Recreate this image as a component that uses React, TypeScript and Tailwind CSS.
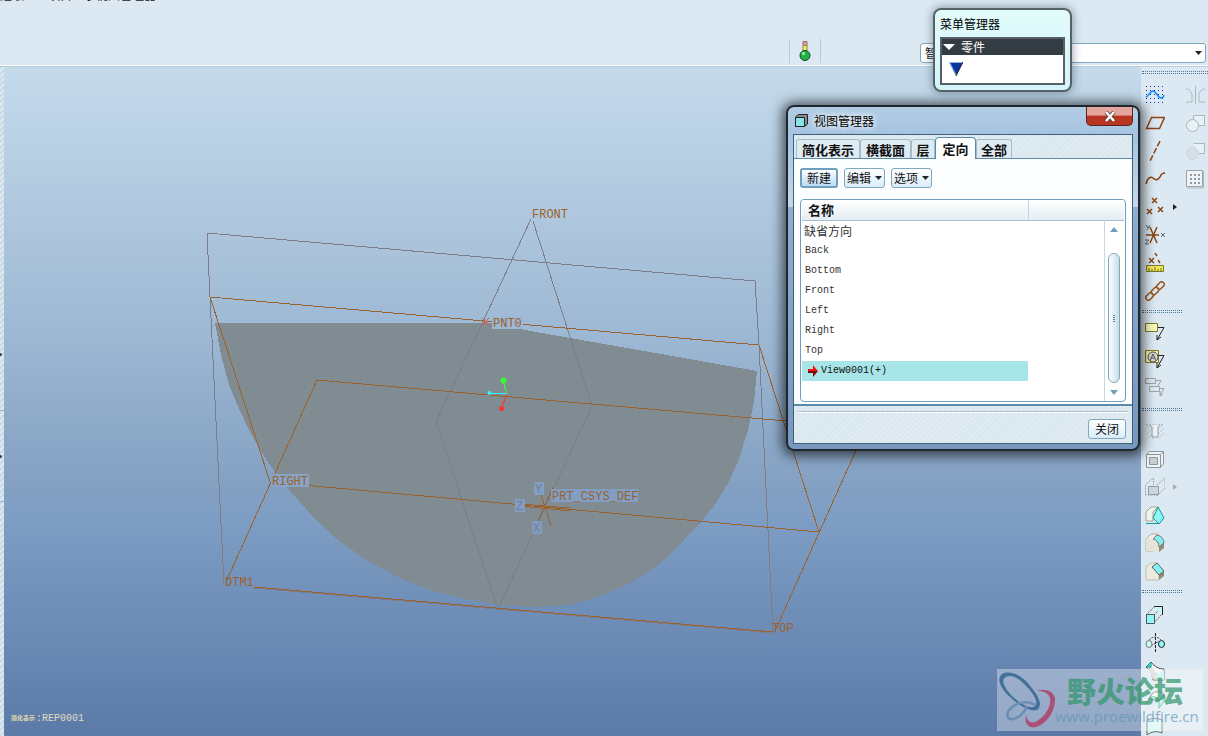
import type { ReactNode } from 'react';

const VIEWS = ['Back', 'Bottom', 'Front', 'Left', 'Right', 'Top'];

const BROWN = '#8b4513';
const PALE = '#a9b6bf';

type Tool = { name: string; icon: ReactNode; side?: ReactNode; more?: boolean; off?: boolean };

const datumTools: Tool[] = [
  {
    name: '草绘',
    icon: (
      <>
        <path
          d="M1 1.500h18M1 5.500h18M1 9.500h18M1 13.500h18M1 17.500h18"
          stroke="#14389c"
          strokeDasharray="1 3"
          shapeRendering="crispEdges"
        />
        <path d="M1 12c3-1 4-6 7-6s5 7 8 7 2-1 3-3" stroke="#0a84ff" strokeWidth="1.500" />
      </>
    ),
    side: <path d="M10.500 1v18M1 4c4 0 6 4 6 6v7H1M20 4c-4 0-6 4-6 6v7h6" stroke={PALE} />,
  },
  {
    name: '基准平面',
    icon: <path d="M6.500 4.500h13l-5 11h-13z" stroke={BROWN} strokeWidth="1.500" />,
    side: (
      <>
        <path d="M8.500 2.500h11v10h-11z" stroke={PALE} fill="#eaf1f6" />
        <circle cx="7.500" cy="12.500" r="6" stroke={PALE} fill="#eaf1f6" />
      </>
    ),
  },
  {
    name: '基准轴',
    icon: <path d="M15 0L5 20" stroke={BROWN} strokeWidth="1.500" strokeDasharray="6 2" />,
    side: (
      <>
        <path d="M8.500 2.500h11v10h-6" stroke={PALE} fill="#eaf1f6" />
        <circle cx="7.500" cy="12.500" r="6" stroke="#cdd6dd" fill="#d7dee4" />
      </>
    ),
  },
  {
    name: '基准曲线',
    icon: <path d="M1 15c1-5 4-8 7-6s4 3 7-1c1-3 3-4 5-4" stroke={BROWN} strokeWidth="1.500" />,
    side: (
      <>
        <path d="M1.500 1.500h16v16h-16z" stroke="#96a2aa" fill="#f0f4f7" />
        <path d="M18.500 2v17H2" stroke="#b0babf" />
        <path
          d="M5 6h10M5 10h10M5 14h10"
          stroke="#8f9ba3"
          strokeWidth="2"
          strokeDasharray="2 2"
          shapeRendering="crispEdges"
        />
      </>
    ),
  },
  {
    name: '基准点',
    icon: (
      <path
        d="M7 1l5 5M12 1L7 6M2 12l5 5M7 12l-5 5M13 10l5 5M18 10l-5 5"
        stroke={BROWN}
        strokeWidth="1.500"
      />
    ),
    more: true,
  },
  {
    name: '坐标系',
    icon: (
      <>
        <path d="M1 10h13M5 2l7 16M12 2L5 18" stroke={BROWN} strokeWidth="1.500" />
        <path d="M1 0l2 3M5 0L2 5M0 15h4l-4 4h4M16 8l4 4M20 8l-4 4" stroke="#5f6a70" />
      </>
    ),
  },
  {
    name: '分析',
    icon: (
      <>
        <path d="M4 5l5 5M9 5l-5 5M10 0l2 3M13 7l2 3" stroke={BROWN} strokeWidth="1.500" />
        <path d="M1.500 12.500h17v6h-17z" stroke="#7d7a28" fill="#f0ea58" />
        <path d="M4 18v-3M7 18v-2M10 18v-4M13 18v-2M16 18v-3" stroke="#6b681c" />
      </>
    ),
  },
  {
    name: '参照',
    icon: (
      <g stroke="#9a5a22" strokeWidth="1.500">
        <rect x="-4" y="-2.500" width="8" height="5" rx="2" transform="translate(4.500 15.500) rotate(-45)" />
        <rect x="-4" y="-2.500" width="8" height="5" rx="2" transform="translate(10 10) rotate(-45)" />
        <rect x="-4" y="-2.500" width="8" height="5" rx="2" transform="translate(15.500 4.500) rotate(-45)" />
      </g>
    ),
  },
];

const noteTools: Tool[] = [
  {
    name: '注释',
    icon: (
      <>
        <path d="M.5 2.500h12v8H.5z" stroke="#7c7a1e" fill="#fbfbc0" />
        <path d="M13 6.500h6L12 19M12 14v5l4-3" stroke="#222" />
      </>
    ),
  },
  {
    name: '符号',
    icon: (
      <>
        <path d="M.5 1.500h13v12H.5z" stroke="#7c7a1e" fill="#f5f3a8" />
        <circle cx="8" cy="8" r="5" stroke="#555" fill="#d5d6cf" />
        <path d="M5 12l3-7 3 7M6 9h4" stroke="#555" />
        <path d="M13 6.500h6L12 19M12 14v5l4-3" stroke="#222" />
      </>
    ),
  },
  {
    name: '传播',
    icon: (
      <g stroke="#9aa5ad">
        <path d="M.5 1.500h10v5H.5zM4.500 9.500h10v5h-10z" fill="#e3e9ee" />
        <path d="M11 3.500h5l-3 5M15 11.500h4l-4 7M15 14v5l3-2" />
      </g>
    ),
    off: true,
  },
];

const featureTools: Tool[] = [
  {
    name: '孔',
    icon: (
      <>
        <path d="M2 8l4-4M2 13l6-7M2 18l6-6M7 18l3-3M13 8l5-5M13 13l6-6M13 18l6-6" stroke="#c0c9cf" />
        <path d="M1 4h18" stroke="#9fabb3" strokeDasharray="2 1" />
        <path d="M5 4l2 2v10h6V6l2-2" stroke="#93a0a8" fill="#eef3f7" />
      </>
    ),
    off: true,
  },
  {
    name: '壳',
    icon: (
      <>
        <path d="M1.500 5.500l3-3h14v12l-3 4h-14z" stroke="#8b969d" fill="#f0f3f5" />
        <path d="M1.500 5.500h14v13M15.500 5.500l3-3" stroke="#8b969d" />
        <path d="M4.500 8.500h8v7h-8z" stroke="#8b969d" fill="#c9d0d5" />
      </>
    ),
    off: true,
  },
  {
    name: '筋',
    icon: (
      <>
        <path d="M.5 18.500V8l8-7v7M12 18.500h1M12 8l8-7v10l-7 7H1" stroke="#9ba7af" strokeDasharray="2 1" />
        <path d="M3.500 9.500h10v8h-10z" stroke="#909ba3" fill="#ccd5db" />
      </>
    ),
    more: true,
    off: true,
  },
  {
    name: '拔模',
    icon: (
      <>
        <path d="M1 7l5-5h7L8 7v9H1z" stroke="#a8a294" fill="#eef5e9" />
        <path d="M8 13l5-11 6 11-5 6z" stroke="#0d9b9b" fill="#8ff6f6" />
        <path d="M1 18.500h13" stroke="#0d9b9b" />
      </>
    ),
  },
  {
    name: '倒圆角',
    icon: (
      <>
        <path d="M1 6l5-5h7L8 6v12H1z" fill="#f1efe4" stroke="#b5afa0" />
        <path d="M1 6h7c4 1 6 4 6 12H1z" fill="#e6e4d8" />
        <path d="M14 19v-7l5-3v6z" fill="#938b75" />
        <path d="M8 6l4-4c5 1 7 5 7 8l-5 4c0-4-2-7-6-8z" fill="#7ff1f4" stroke="#6f6f6f" />
      </>
    ),
  },
  {
    name: '倒角',
    icon: (
      <>
        <path d="M1 6l5-4h6L7 6l7 7v6H1z" fill="#eceade" stroke="#c3beae" />
        <path d="M14 19v-6l5-3v5z" fill="#938b75" />
        <path d="M7 6l5-4 7 8-5 4z" fill="#7ff1f4" stroke="#5f5f5f" />
      </>
    ),
  },
];

const shapeTools: Tool[] = [
  {
    name: '拉伸',
    icon: (
      <>
        <path d="M1 10l8-8M9 10l8-8M9 18l8-9" stroke="#666" strokeDasharray="2 1" />
        <path d="M9 1.500h8.500V10" stroke="#222" fill="#c9f3f5" />
        <path d="M1.500 9.500h8v9h-8z" stroke="#555" fill="#8ffafa" />
      </>
    ),
  },
  {
    name: '旋转',
    icon: (
      <>
        <path d="M10.500 0v20" stroke="#222" strokeDasharray="3 1" />
        <path d="M4 7c4-4 8-4 12 0M6 13l8-5" stroke="#555" strokeDasharray="2 1" />
        <ellipse cx="4" cy="11" rx="3" ry="3.500" stroke="#777" fill="#c7fafa" />
        <ellipse cx="16.500" cy="11" rx="3" ry="3.500" stroke="#222" fill="#8ffafa" />
      </>
    ),
  },
  {
    name: '可变截面扫描',
    icon: (
      <>
        <path d="M6 1c4 5 8 7 13 7v11H8C7 12 5 9 1 6z" fill="#f3f6f6" stroke="#444" />
        <path d="M2 6l6 12 10 1L6 6z" fill="#d4d4d4" />
        <path d="M10 15l9-6v10z" fill="#b6f5f2" />
        <path d="M1 6l5-5v5z" fill="#49e0d4" stroke="#1b8f86" />
      </>
    ),
  },
  {
    name: '边界混合',
    icon: (
      <>
        <path d="M1 15C4 8 8 11 14 12l5-7c-5-3-9-3-12 0z" fill="#f3faf8" stroke="#666" />
        <path d="M3 10c4-4 9-2 11 1M14 12v7l5-7V5z" stroke="#29a896" fill="#c2f4ea" />
      </>
    ),
  },
  {
    name: '造型',
    icon: <path d="M2 3c5-2 10-2 15 0v13c-5-2-10-2-15 2z" fill="#d5f7f6" stroke="#666" />,
  },
];

function Glyph({ children }: { children: ReactNode }) {
  return (
    <svg viewBox="0 0 20 20" className="h-5 w-5 shrink-0" fill="none">
      {children}
    </svg>
  );
}

function Dots({ wide = false }: { wide?: boolean }) {
  return (
    <div
      className={`${wide ? 'w-full' : 'w-10'} h-[3px] border-y border-dotted border-[#4d7896] ml-px`}
    />
  );
}

function ToolGroup({ tools }: { tools: Tool[] }) {
  return (
    <ul>
      {tools.map((t) => (
        <li key={t.name} className="flex h-7 items-center">
          <button type="button" aria-label={t.name} disabled={t.off} className="flex h-7 w-7 items-center justify-center">
            <Glyph>{t.icon}</Glyph>
          </button>
          <span className="flex w-3 justify-center">
            {t.more && (
              <svg viewBox="0 0 4 6" className="h-1.5 w-1">
                <path d="M0 0l4 3-4 3z" fill={t.off ? '#a4afb6' : '#222'} />
              </svg>
            )}
          </span>
          {t.side && (
            <button type="button" disabled aria-label={`${t.name}编辑`} className="flex h-7 flex-1 items-center justify-center">
              <Glyph>{t.side}</Glyph>
            </button>
          )}
        </li>
      ))}
    </ul>
  );
}

function Toolbar() {
  return (
    <aside className="w-[67px] shrink-0 overflow-hidden bg-[#dce9f2] pt-1">
      <div className="flex h-[10px] items-start">
        <Dots wide />
      </div>
      <ToolGroup tools={datumTools} />
      <div className="flex h-3 items-center"><Dots /></div>
      <ToolGroup tools={noteTools} />
      <div className="flex h-4 items-center"><Dots /></div>
      <ToolGroup tools={featureTools} />
      <div className="flex h-4 items-center pb-1"><Dots /></div>
      <ToolGroup tools={shapeTools} />
    </aside>
  );
}

// label drawn on the model, with the flat patch the CAD view paints behind it
function Label({ x, y, text, fill, patch }: { x: number; y: number; text: string; fill: string; patch?: string }) {
  return (
    <g>
      {patch && <rect x={x - 1} y={y - 11} width={text.length * 7 + 3} height="13" fill={patch} />}
      <text x={x} y={y} fill={fill} fontSize="12" fontFamily="'Liberation Mono', monospace">
        {text}
      </text>
    </g>
  );
}

function Scene() {
  const orange = '#9c622d';
  const grey = '#7d7d89';
  return (
    <svg
      viewBox="4 67 1137 669"
      preserveAspectRatio="xMidYMid slice"
      className="h-full w-full"
      fill="none"
      role="img"
      aria-label="模型视图"
    >
      <g shapeRendering="crispEdges">
        <path
          fill="#808b92"
          d="M215 323H492L525 330L610 345L757 371L754 402L748 430L738 462L727 485L714 506L700 523L668 557L650 571L630 583L600 596L570 605L530 607L498 605L460 598L430 590L400 578L366 560L338 540L313 517L290 491L275 472L262 453L250 432L241 413L229 385L221 355Z"
        />
        <path d="M207 233L755 281L759 345L773 633L254 588M207 233L210 297L224 585" stroke={grey} />
        <path d="M531 219L436 422L498 609L592 406L533 221" stroke={grey} />
        <path d="M210 297L759 345L819 532L270 482ZM317 380L866 428L775 631M317 380L226 582M254 587L773 632" stroke={orange} />
        <path d="M519 504L570 508M520 506L570 511M538 485L551 526M553 487L536 526" stroke={orange} />
        <path d="M482 318l7 8M489 318l-7 8" stroke="#cf5f50" />
        <path d="M490 393.500H507" stroke="#33f0ff" />
        <path d="M503 381L507 394" stroke="#33ff33" />
        <path d="M507 395L501 408" stroke="#ff3030" />
      </g>
      <circle cx="503.500" cy="380.500" r="3" fill="#33ff33" />
      <circle cx="489.500" cy="393" r="2" fill="#33f0ff" />
      <circle cx="501.500" cy="408.500" r="2.500" fill="#ff3030" />
      <Label x={532} y={218} text="FRONT" fill={orange} />
      <Label x={493} y={327} text="PNT0" fill={orange} patch="#9db7d4" />
      <Label x={272} y={485} text="RIGHT" fill={orange} patch="#87a3c6" />
      <Label x={225} y={586} text="DTM1" fill={orange} />
      <Label x={772} y={632} text="TOP" fill={orange} />
      <Label x={552} y={500} text="PRT_CSYS_DEF" fill={orange} patch="#819fc5" />
      <Label x={535} y={493} text="Y" fill={grey} patch="#819fc5" />
      <Label x={516} y={510} text="Z" fill={grey} patch="#819fc5" />
      <Label x={533} y={532} text="X" fill={grey} patch="#7f9dc4" />
      <text x="11" y="720" fontSize="6" fontWeight="700" fill="#e8dcae" fontFamily="'Noto Sans CJK SC', sans-serif">简化表示</text>
      <text x="36" y="721" fontSize="10" fill="#e0dcc4" fontFamily="'Liberation Mono', monospace">:REP0001</text>
    </svg>
  );
}

function MenuManager() {
  return (
    <section className="absolute right-[136px] top-2 h-21 w-[139px] rounded-lg border-2 border-[#566166] bg-linear-to-b from-[#e2fbfb] to-[#d3f4fa] px-[5px] shadow-[0_0_8px_1px_rgba(40,60,80,0.45)]">
      <h2 className="flex h-[27px] items-center text-xs text-black">菜单管理器</h2>
      <div className="border-2 border-[#566166] bg-white">
        <button type="button" className="flex h-4 w-full items-center gap-1.5 bg-[#323c42] px-px text-xs leading-4 text-white">
          <svg viewBox="0 0 12 6" className="h-1.5 w-3"><path d="M0 0h12L6 6z" fill="#fff" /></svg>
          零件
        </button>
        <div className="flex h-7 items-center px-[7px]">
          <svg viewBox="0 0 14 14" className="h-3.5 w-3.5">
            <path d="M0 0h14L7 14z" fill="#0b35a0" />
            <path d="M14 0L7 14" stroke="#222" />
            <path d="M0 .5h13M.5 0L7 13" stroke="#8fb3d9" />
          </svg>
        </div>
      </div>
    </section>
  );
}

const plainButton =
  'flex h-5 items-center justify-center rounded-[3px] border border-[#7fa9be] bg-linear-to-b from-white to-[#d9ecf8] text-xs text-[#111]';

function ArrowDown() {
  return (
    <svg viewBox="0 0 7 4" className="ml-1 h-1 w-[7px]"><path d="M0 0h7L3.500 4z" fill="#1c262c" /></svg>
  );
}

function ViewTable() {
  return (
    <div className="overflow-hidden rounded-[4px] border border-[#6f9fb8] bg-white px-px">
      <table className="w-full table-fixed border-collapse text-xs text-[#333]">
        <colgroup>
          <col className="w-[226px]" />
          <col />
          <col className="w-5" />
        </colgroup>
        <thead>
          <tr className="h-5 border-b border-[#a9c0cd] bg-linear-to-b from-white to-[#e4edf3]">
            <th className="border-r border-[#c3d2dc] p-0 pl-1.5 text-left text-[13px] leading-5 text-[#111]">名称</th>
            <th colSpan={2} className="p-0" />
          </tr>
        </thead>
        <tbody>
          <tr className="h-5">
            <td colSpan={2} className="p-0 pl-0.5 leading-5">缺省方向</td>
            <td rowSpan={9} className="border-l border-[#c3d9e4] p-0">
              <div className="flex h-[180px] flex-col items-center justify-between py-1.5">
                <svg viewBox="0 0 8 5" className="h-[5px] w-2"><path d="M4 0l4 5H0z" fill="#6f9fb8" /></svg>
                <div className="mt-4 mb-0.5 flex h-[130px] w-3 items-center justify-center rounded-full border border-[#7fa9be] bg-linear-to-r from-white to-[#c6dcea]">
                  <span className="h-[7px] w-0.5 bg-[repeating-linear-gradient(#5c8296_0_1px,transparent_1px_2px)]" />
                </div>
                <svg viewBox="0 0 8 5" className="h-[5px] w-2"><path d="M0 0h8L4 5z" fill="#6f9fb8" /></svg>
              </div>
            </td>
          </tr>
          {VIEWS.map((v) => (
            <tr key={v} className="h-5">
              <td colSpan={2} className="p-0 pl-[3px] font-['Liberation_Mono',monospace] text-[10px] leading-5">{v}</td>
            </tr>
          ))}
          <tr className="h-5">
            <td className="bg-[#a8e5e8] p-0 pl-1.5 font-['Liberation_Mono',monospace] text-[10px] text-[#111]">
              <span className="flex items-center gap-[3px]">
                <svg viewBox="0 0 10 12" className="h-3 w-2.5">
                  <path d="M0 4h5V0l5 6H0z" fill="#ff1010" />
                  <path d="M0 6h10l-5 6V8H0z" fill="#7c0808" />
                </svg>
                View0001(+)
              </span>
            </td>
            <td />
          </tr>
          <tr className="h-5"><td colSpan={2} /></tr>
        </tbody>
      </table>
    </div>
  );
}

function ViewManager() {
  const tab = 'h-[19px] rounded-t-[3px] border border-b-0 border-[#a3bccb] bg-[#dfebf2]';
  const stripes = 'bg-[repeating-linear-gradient(135deg,#d9e7ef_0_2px,#e0ecf2_2px_4px)]';
  return (
    <section
      role="dialog"
      aria-label="视图管理器"
      className="absolute right-[68px] top-[105px] w-[354px] rounded-lg border-2 border-[#1e262e] bg-[linear-gradient(#b3cce4_0,#a5c4e2_28px,#c4d8ea_100px,#8fadd0_100px,#7797bf_100%)] px-[5px] pb-[5px] shadow-[0_1px_12px_4px_rgba(0,0,0,0.6)]"
    >
      <header className="flex h-[27px] items-center gap-1.5 pl-0.5">
        <svg viewBox="0 0 13 13" className="h-[13px] w-[13px]">
          <path d="M.5 3l3-2.500h9V10l-3 2.500z" fill="#878c90" stroke="#222" />
          <path d="M.5 3.500h9v9h-9z" fill="#86e4ea" stroke="#222" />
        </svg>
        <h2 className="flex-1 text-xs text-black [text-shadow:0_0_6px_#fff,0_0_6px_#fff]">视图管理器</h2>
        <button
          type="button"
          aria-label="关闭窗口"
          className="flex h-[19px] w-[47px] items-center justify-center self-start rounded-b-[5px] border border-t-0 border-[#5b2420] bg-linear-to-b from-[#e3a59c] from-45% to-[#b73521] to-50%"
        >
          <svg viewBox="0 0 12 11" className="h-[11px] w-3">
            <path d="M2 1l8 9M10 1L2 10" stroke="#5c3a3a" strokeWidth="4" />
            <path d="M2 1l8 9M10 1L2 10" stroke="#fff" strokeWidth="2.500" />
          </svg>
        </button>
      </header>
      <div className="border border-[#3f5f74]">
        <nav className={`flex h-6 items-end border-b border-[#5b8ba5] px-0.5 text-[13px] leading-[19px] font-bold text-[#111] ${stripes}`}>
          <button type="button" className={`${tab} w-16`}>简化表示</button>
          <button type="button" className={`${tab} w-[51px]`}>横截面</button>
          <button type="button" className={`${tab} w-6`}>层</button>
          <button type="button" className="-mb-px h-[22px] w-[41px] rounded-t-[4px] border border-b-0 border-[#5b8ba5] bg-white">定向</button>
          <button type="button" className={`${tab} w-9`}>全部</button>
        </nav>
        <div className="border-b-2 border-[#5b8ba5] bg-[#fbfdff] px-1.5 pt-[9px] pb-0.5">
          <div className="mb-[11px] flex gap-1.5">
            <button type="button" className="flex h-5 w-[38px] items-center justify-center rounded-[3px] border-2 border-[#6f9fbd] bg-linear-to-b from-white to-[#b9dcf6] text-xs text-[#111]">新建</button>
            <button type="button" className={`${plainButton} w-[41px]`}>编辑<ArrowDown /></button>
            <button type="button" className={`${plainButton} w-[41px]`}>选项<ArrowDown /></button>
          </div>
          <ViewTable />
        </div>
        <footer className={`px-1 pt-[5px] pb-1 ${stripes}`}>
          <div className="h-0.5 border-t border-[#aabfcb] bg-white" />
          <div className="flex justify-end pt-1.5 pr-0.5">
            <button type="button" className={`${plainButton} w-[38px]`}>关闭</button>
          </div>
        </footer>
      </div>
    </section>
  );
}

function Watermark() {
  return (
    <div className="pointer-events-none absolute right-[5px] bottom-[5px] flex h-[62px] w-[206px] items-center bg-white/35">
      <svg viewBox="0 0 58 62" className="h-[62px] w-[58px] shrink-0 opacity-80" fill="none">
        <path
          fillRule="evenodd"
          fill="#2f6290"
          d="M5 5C14 0 27 8 34 18C42 28 46 36 40 41C34 43 22 37 13 28C4 20-1 10 5 5ZM9 8C4 10 6 17 14 26C23 35 34 41 38 37C42 33 36 24 29 17C22 9 14 5 9 8Z"
        />
        <path
          fill="#b03a63"
          d="M40 22C47 19 56 21 58 29C59 41 50 55 39 58C32 60 27 55 29 46C30 51 33 55 38 53C47 49 55 37 53 29C51 23 46 22 40 22Z"
        />
        <path d="M38 36C32 31 20 33 14 39C8 45 10 51 16 50C22 49 28 43 30 37" stroke="#6288b2" strokeWidth="2.500" />
      </svg>
      <div className="whitespace-nowrap opacity-70">
        <p className="pl-3 text-[29px] leading-8 font-black text-[#2f9468]">野火论坛</p>
        <p className="font-['Open_Sans',sans-serif] text-[15px] leading-5 text-[#6096b5]">www.proewildfire.cn</p>
      </div>
    </div>
  );
}

export default function App() {
  return (
    <div className="relative flex h-screen flex-col overflow-hidden bg-[#dce9f2] font-['Noto_Sans_CJK_SC',sans-serif]">
      <header className="flex h-[67px] shrink-0 flex-col justify-between border-b border-[#b5cbd9]">
        <p className="flex h-px items-end overflow-hidden text-xs leading-3 text-[#222]">选取一个项目显示视图管理器</p>
        <div className="flex h-[27px] justify-end border-b border-white">
          <div className="flex h-6 w-8 items-center justify-center border-x border-[#b9cbd7]">
            <svg viewBox="0 0 12 20" className="h-5 w-3">
              <path d="M4 .5h4v4H4z" fill="#ee9a98" stroke="#8b7070" />
              <path d="M4 4.500h4v5H4z" fill="#f5ef5a" stroke="#8d8a4a" />
              <circle cx="6" cy="14.500" r="5" fill="#22b245" stroke="#0d4a1c" />
              <circle cx="4.500" cy="12.500" r="1.500" fill="#a9efb7" />
            </svg>
          </div>
          <div className="relative mt-1 mr-0.5 ml-[99px] h-5 w-[286px]">
            <select aria-label="选取过滤器" className="block h-5 w-full appearance-none rounded-[3px] border border-[#7fa9be] bg-white pl-1 text-xs text-[#222]">
              <option>智能</option>
            </select>
            <svg viewBox="0 0 7 4" className="pointer-events-none absolute top-2 right-1 h-1 w-[7px]">
              <path d="M0 0h7L3.500 4z" fill="#222" />
            </svg>
          </div>
        </div>
      </header>
      <main className="flex min-h-0 flex-1">
        <div className="flex w-1 shrink-0 flex-col bg-[repeating-linear-gradient(135deg,#cadbe6_0_2px,#dde9f0_2px_4px)]">
          <div className="flex h-[344px] items-end border-b border-[#9fb4c2] pb-[54px]">
            <span className="h-[3px] w-0.5 rounded-r-full bg-[#33424d]" />
          </div>
          <div className="flex h-[91px] items-center border-b border-[#9fb4c2]">
            <span className="h-[3px] w-0.5 rounded-r-full bg-[#33424d]" />
          </div>
        </div>
        <div className="min-w-0 flex-1 bg-[linear-gradient(#c5daeb_0%,#9eb9d4_39%,#83a0c2_63%,#809fc5_66%,#5b7aa8_100%)]">
          <Scene />
        </div>
        <Toolbar />
      </main>
      <Watermark />
      <ViewManager />
      <MenuManager />
    </div>
  );
}
